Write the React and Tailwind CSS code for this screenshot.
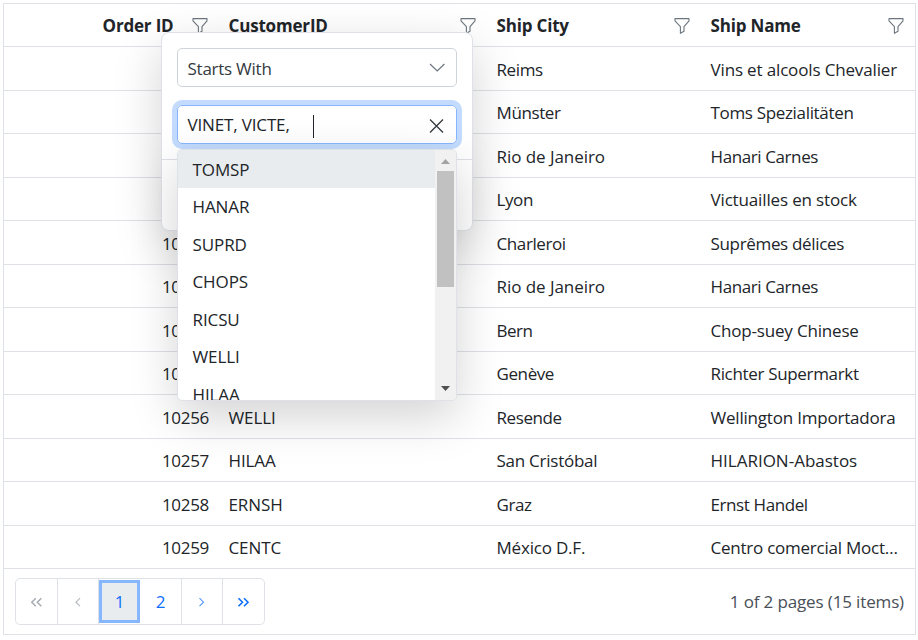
import React from 'react';

const rows = [
  ['10248', 'VINET', 'Reims', 'Vins et alcools Chevalier', '', 'tracking-[-0.15px]'],
  ['10249', 'TOMSP', 'Münster', 'Toms Spezialitäten', '', 'tracking-[-0.33px]'],
  ['10250', 'HANAR', 'Rio de Janeiro', 'Hanari Carnes', 'tracking-[-0.05px]', ''],
  ['10251', 'VICTE', 'Lyon', 'Victuailles en stock', '', 'tracking-[-0.15px]'],
  ['10252', 'SUPRD', 'Charleroi', 'Suprêmes délices', '', 'tracking-[-0.33px]'],
  ['10253', 'HANAR', 'Rio de Janeiro', 'Hanari Carnes', 'tracking-[-0.05px]', ''],
  ['10254', 'CHOPS', 'Bern', 'Chop-suey Chinese', 'tracking-[-0.5px]', 'tracking-[-0.18px]'],
  ['10255', 'RICSU', 'Genève', 'Richter Supermarkt', '', 'tracking-[-0.33px]'],
  ['10256', 'WELLI', 'Resende', 'Wellington Importadora', '', 'tracking-[-0.2px]'],
  ['10257', 'HILAA', 'San Cristóbal', 'HILARION-Abastos', 'tracking-[-0.25px]', 'tracking-[0px]'],
  ['10258', 'ERNSH', 'Graz', 'Ernst Handel', '', ''],
  ['10259', 'CENTC', 'México D.F.', 'Centro comercial Moctezuma', 'tracking-[-0.2px]', 'tracking-[-0.24px]'],
];

const options = ['TOMSP', 'HANAR', 'SUPRD', 'CHOPS', 'RICSU', 'WELLI', 'HILAA'];

const columns = 'grid grid-cols-[215px_268px_214px_214px]';

function Funnel() {
  return (
    <svg className="h-4 w-4 shrink-0" viewBox="0 0 16 16" fill="none" stroke="#6c757d" strokeWidth="1.1" strokeLinejoin="round">
      <path d="M1 .6h14v2.2L10 8.6v4.6l-3.6 2.1V8.6L1 2.8z" />
    </svg>
  );
}

function Heading({ title, right }) {
  return (
    <div className={`flex items-center pl-[9.5px] pr-[11px] pt-0.5 font-bold ${right ? 'justify-end gap-[18.5px]' : 'justify-between'}`}>
      <span className="tracking-[-0.18px]">{title}</span>
      <Funnel />
    </div>
  );
}

function Pager() {
  const cell = 'flex items-center justify-center border-r border-[#dee2e6]';
  return (
    <div className="flex h-[65px] items-center justify-between pl-[11px] pr-[11px]">
      <div className="grid h-[47px] grid-cols-[42px_41px_41px_42px_41px_41px] rounded-[5px] border border-[#dee2e6] text-[#0d6efd]">
        <div className={cell}>
          <svg className="h-4 w-4" viewBox="0 0 16 16" fill="none" stroke="#a5abb1" strokeWidth="1.5"><path d="M6.8 4.2l-4 4 4 4M12.3 4.2l-4 4 4 4" /></svg>
        </div>
        <div className={cell}>
          <svg className="h-4 w-4" viewBox="0 0 16 16" fill="none" stroke="#b4b9be" strokeWidth="1.2"><path d="M10 4.2l-4 4 4 4" /></svg>
        </div>
        <div className="my-px flex items-center justify-center border-[3px] border-[#86b7fe] bg-[#e9ecef]">1</div>
        <div className={cell}>2</div>
        <div className={cell}>
          <svg className="h-4 w-4" viewBox="0 0 16 16" fill="none" stroke="#5a9bfd" strokeWidth="1.2"><path d="M5.5 4.2l4 4-4 4" /></svg>
        </div>
        <div className="flex items-center justify-center">
          <svg className="h-4 w-4" viewBox="0 0 16 16" fill="none" stroke="#0d6efd" strokeWidth="1.6"><path d="M2.5 4.2l4 4-4 4M8 4.2l4 4-4 4" /></svg>
        </div>
      </div>
      <span className="tracking-[-0.14px] text-[#495057]">1 of 2 pages (15 items)</span>
    </div>
  );
}

function FilterDialog() {
  return (
    <div className="absolute left-[161px] top-8 h-[199px] w-[312px] rounded-lg border border-[#dee2e6] bg-white px-[15px] pt-[15px] shadow-[0_16px_48px_rgba(0,0,0,0.175)]">
      <div className="flex h-[39px] items-center justify-between rounded-[5px] border border-[#ced4da] pl-[9.5px] pr-[11px] text-[#343a40]">
        <span className="pt-0.5 tracking-[-0.25px]">Starts With</span>
        <svg className="h-4 w-4" viewBox="0 0 16 16" fill="none" stroke="#6c757d" strokeWidth="1.2"><path d="M1 4l7.2 7 7.2-7" /></svg>
      </div>
      <div className="mt-[18px] flex h-[39px] items-center rounded-[5px] border border-[#86b7fe] pl-[9.5px] pr-3 shadow-[0_0_0_5px_#c2dbfe]">
        <span className="w-[104.5px] whitespace-nowrap tracking-[-0.15px]">VINET, VICTE,</span>
        <span className="ml-[21px] mt-1 h-[23px] w-px bg-[#212529]" />
        <svg className="ml-auto mt-0.5 h-4 w-4" viewBox="0 0 16 16" fill="none" stroke="#343a40" strokeWidth="1.3"><path d="M2 1.5l13 13M15 1.5l-13 13" /></svg>
      </div>
      <div className="-mx-[15px] mt-[15px] h-px bg-[#dee2e6]" />
    </div>
  );
}

function Suggestions() {
  return (
    <div className="absolute left-[177px] top-[149px] flex h-[252px] w-[280px] overflow-hidden rounded-[5px] border border-[#dee2e6] bg-white shadow-[0_16px_48px_rgba(0,0,0,0.175)]">
      <div className="h-[250px] flex-1 overflow-hidden">
        {options.map((name, i) => (
          <div key={name} className={`flex items-center pl-[14.5px] pt-px tracking-[-0.1px] ${i === 0 ? 'h-[38px] bg-[#e9ecef]' : 'h-[37.5px]'}`}>{name}</div>
        ))}
      </div>
      <div className="flex w-[21px] flex-col items-center bg-[#f1f1f1] pt-[9px]">
        <svg className="h-[5px] w-[9px]" viewBox="0 0 9 5" fill="#a3a3a3"><path d="M4.5 0L9 5H0z" /></svg>
        <div className="mt-[7px] h-[116px] w-[17px] bg-[#c1c1c1]" />
        <svg className="mt-[99px] h-[5px] w-[9px]" viewBox="0 0 9 5" fill="#505050"><path d="M4.5 5L9 0H0z" /></svg>
      </div>
    </div>
  );
}

export default function App() {
  return (
    <div className="relative h-[640px] w-[918px] overflow-hidden bg-white p-[3px] font-['Open_Sans','Noto_Sans',sans-serif] text-[17px] leading-6 tracking-[-0.4px] text-[#212529]">
      <div className="h-[632px] w-[913px] border border-[#dee2e6]">
        <div className={`${columns} h-[43px] border-b border-[#dee2e6]`}>
          <Heading title="Order ID" right />
          <Heading title="CustomerID" />
          <Heading title="Ship City" />
          <Heading title="Ship Name" />
        </div>
        {rows.map(([id, customer, city, name, cityTracking, nameTracking], i) => (
          <div key={id} className={`${columns} items-center whitespace-nowrap border-b border-[#dee2e6] pt-0.5 ${i % 2 ? 'h-[43px]' : 'h-11'}`}>
            <span className="pr-2.5 text-right tracking-[-0.3px]">{id}</span>
            <span className="px-[9.5px] tracking-[-0.1px]">{customer}</span>
            <span className={`px-[9.5px] ${cityTracking}`}>{city}</span>
            <span className={`overflow-hidden text-ellipsis pl-[9.5px] pr-3 ${nameTracking}`}>{name}</span>
          </div>
        ))}
        <Pager />
      </div>
      <FilterDialog />
      <Suggestions />
    </div>
  );
}
